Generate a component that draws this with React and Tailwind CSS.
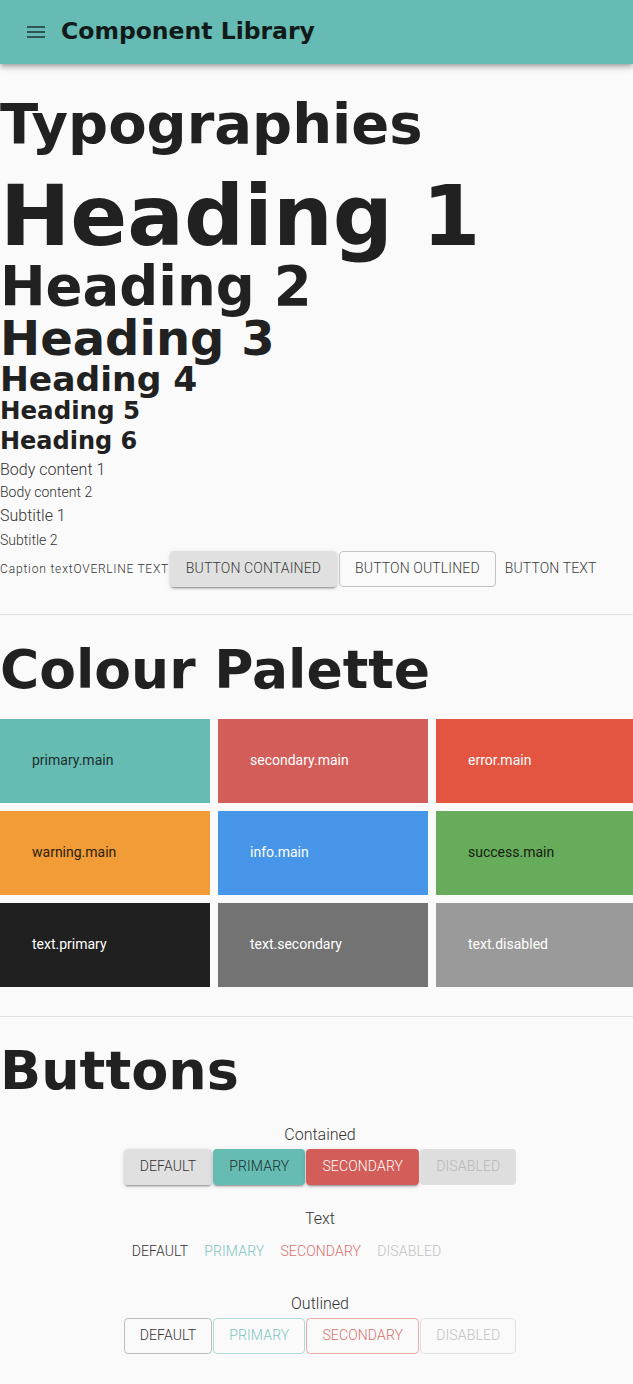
import React from "react";

function MenuIcon() {
  return (
    <svg width="24" height="24" viewBox="0 0 24 24" className="shrink-0">
      <path d="M3 18h18v-2H3v2zm0-5h18v-2H3v2zm0-7v2h18V6H3z" fill="#2f5652" />
    </svg>
  );
}

const swatches = [
  { name: "primary.main", cls: "bg-[#66bbb3] text-[#1c2e2c]" },
  { name: "secondary.main", cls: "bg-[#d35d58] text-white" },
  { name: "error.main", cls: "bg-[#e35441] text-white" },
  { name: "warning.main", cls: "bg-[#f29c38] text-[#2a1d0c]" },
  { name: "info.main", cls: "bg-[#4695e8] text-white" },
  { name: "success.main", cls: "bg-[#67ac5b] text-[#13200f]" },
  { name: "text.primary", cls: "bg-[#202020] text-white" },
  { name: "text.secondary", cls: "bg-[#737373] text-white" },
  { name: "text.disabled", cls: "bg-[#9a9a9a] text-white" },
];

const raised =
  "shadow-[0_3px_1px_-2px_rgba(0,0,0,0.2),0_2px_2px_0_rgba(0,0,0,0.14),0_1px_5px_0_rgba(0,0,0,0.12)]";

const btn = "h-9 text-[14px] uppercase tracking-[0.01em] font-light";

function Label({ children }) {
  return (
    <div className="self-stretch text-center mt-[22px] text-[16px] leading-[24px] font-light text-[#333]">
      {children}
    </div>
  );
}

export default function App() {
  return (
    <div className="w-[633px] min-h-[1384px] overflow-hidden bg-[#fafafa] text-[#212121] font-['Roboto','Liberation_Sans',sans-serif]">
      <header className="h-16 bg-[#66bbb4] flex items-center pl-6 relative z-10 shadow-[0_2px_4px_-1px_rgba(0,0,0,0.2),0_4px_5px_0_rgba(0,0,0,0.14),0_1px_10px_0_rgba(0,0,0,0.12)]">
        <MenuIcon />
        <div className="ml-[13px] font-['DejaVu_Sans',sans-serif] text-[23.5px] font-bold text-[#111a19] leading-none">
          Component Library
        </div>
      </header>

      <main className="w-[646px]">
        <section className="flex flex-col items-start">
          <h1 className="mt-[30px] font-['DejaVu_Sans',sans-serif] text-[56px] leading-[60px] font-bold">
            Typographies
          </h1>
          <div className="mt-[20px] font-['DejaVu_Sans',sans-serif] text-[84px] leading-none font-bold">
            Heading 1
          </div>
          <div className="mt-[1px] font-['DejaVu_Sans',sans-serif] text-[54.5px] leading-none font-bold">
            Heading 2
          </div>
          <div className="font-['DejaVu_Sans',sans-serif] text-[48px] leading-none font-bold">
            Heading 3
          </div>
          <div className="font-['DejaVu_Sans',sans-serif] text-[34.5px] leading-none font-bold">
            Heading 4
          </div>
          <div className="mt-[3px] font-['DejaVu_Sans',sans-serif] text-[24.5px] leading-none font-bold">
            Heading 5
          </div>
          <div className="mt-[5px] font-['DejaVu_Sans',sans-serif] text-[24px] leading-none font-bold">
            Heading 6
          </div>
          <div className="mt-[5px] text-[16px] leading-[24px] font-light text-[#333]">Body content 1</div>
          <div className="text-[14px] leading-[20px] font-light text-[#333]">Body content 2</div>
          <div className="mt-[2px] text-[16px] leading-[24px] font-light text-[#333]">Subtitle 1</div>
          <div className="mt-[1px] text-[14px] leading-[22px] font-light text-[#333]">Subtitle 2</div>
          <div className="flex items-center h-9 font-light text-[#333]">
            <span className="text-[12px] tracking-[0.07em]">Caption text</span>
            <span className="text-[12px] uppercase tracking-[0.06em]">Overline text</span>
            <button className={`ml-[1px] h-9 px-4 rounded-[4px] bg-[#e0e0e0] text-[14px] uppercase tracking-[0.01em] font-light text-[#3a3a3a] ${raised}`}>
              Button contained
            </button>
            <button className="ml-[2px] h-9 px-[15px] rounded-[4px] border border-[#c4c4c4] text-[14px] uppercase tracking-[0.01em] font-light text-[#3a3a3a]">
              Button outlined
            </button>
            <button className="ml-[1px] h-9 px-2 text-[14px] uppercase tracking-[0.01em] font-light text-[#3a3a3a]">
              Button text
            </button>
          </div>
        </section>

        <hr className="mt-[27px] border-0 h-px bg-[#e0e0e0]" />

        <section>
          <h2 className="mt-[25px] font-['DejaVu_Sans',sans-serif] text-[53.5px] leading-[60px] font-bold">
            Colour Palette
          </h2>
          <div className="mt-[19px] grid grid-cols-3 gap-2">
            {swatches.map((s) => (
              <div key={s.name} className={`h-[84px] flex items-center pl-8 ${s.cls}`}>
                <span className="text-[14px]">{s.name}</span>
              </div>
            ))}
          </div>
        </section>

        <hr className="mt-[29px] border-0 h-px bg-[#e0e0e0]" />

        <section className="pb-8">
          <h2 className="mt-[24px] font-['DejaVu_Sans',sans-serif] text-[54px] leading-[60px] font-bold">
            Buttons
          </h2>
          <div className="mx-auto w-fit flex flex-col items-start -translate-x-[3px]">
            <Label>Contained</Label>
            <div className="mt-[2px] flex gap-px">
              <button className={`${btn} px-4 rounded-[4px] bg-[#e0e0e0] text-[#333] ${raised}`}>Default</button>
              <button className={`${btn} px-4 rounded-[4px] bg-[#66bbb3] text-[#1c2e2c] ${raised}`}>Primary</button>
              <button className={`${btn} px-4 rounded-[4px] bg-[#d35d58] text-white ${raised}`}>Secondary</button>
              <button className={`${btn} px-4 rounded-[4px] bg-[#dedede] text-[#b8b8b8]`}>Disabled</button>
            </div>

            <Label>Text</Label>
            <div className="mt-[3px] flex">
              <button className={`${btn} px-2 text-[#333]`}>Default</button>
              <button className={`${btn} px-2 text-[#7cc6bf]`}>Primary</button>
              <button className={`${btn} px-2 text-[#d9706b]`}>Secondary</button>
              <button className={`${btn} px-2 text-[#c2c2c2]`}>Disabled</button>
            </div>

            <Label>Outlined</Label>
            <div className="mt-[2px] flex gap-px">
              <button className={`${btn} px-[15px] rounded-[4px] border border-[#bdbdbd] text-[#333]`}>Default</button>
              <button className={`${btn} px-[15px] rounded-[4px] border border-[#b0ddd8] text-[#7cc6bf]`}>Primary</button>
              <button className={`${btn} px-[15px] rounded-[4px] border border-[#e9aaa8] text-[#d9706b]`}>Secondary</button>
              <button className={`${btn} px-[15px] rounded-[4px] border border-[#e2e2e2] text-[#c2c2c2]`}>Disabled</button>
            </div>
          </div>
        </section>
      </main>
    </div>
  );
}
